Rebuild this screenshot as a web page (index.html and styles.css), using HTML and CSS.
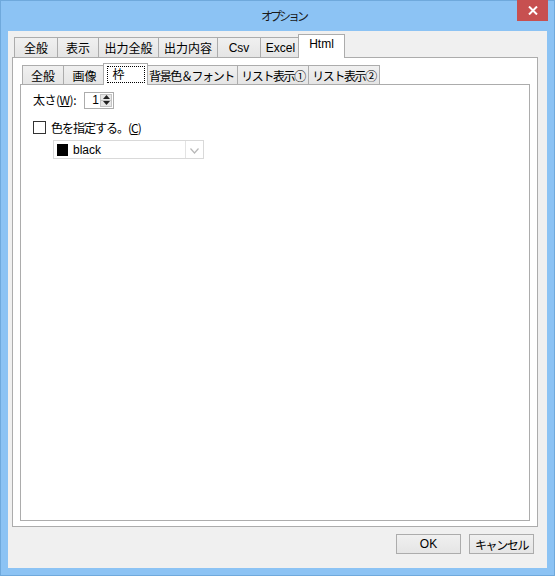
FILE: index.html
```html
<!DOCTYPE html>
<html lang="ja">
<head>
<meta charset="utf-8">
<link rel="stylesheet" href="styles.css">
</head>
<body>
<div class="window">
  <div class="titlebar">
    <span class="title">オプション</span>
    <div class="close"><svg width="10" height="9" viewBox="0 0 10 9"><path d="M1 0.5 L9 8.5 M9 0.5 L1 8.5" stroke="#fff" stroke-width="2"/></svg></div>
  </div>
  <div class="client">
    <div class="tabctl outer">
      <div class="tabs">
        <div class="tab t43">全般</div>
        <div class="tab t41">表示</div>
        <div class="tab t60">出力全般</div>
        <div class="tab t59">出力内容</div>
        <div class="tab t43 latin">Csv</div>
        <div class="tab t40 latin">Excel</div>
        <div class="tab t42 latin sel">Html</div>
      </div>
      <div class="panel outer-panel">
        <div class="tabctl inner">
          <div class="tabs">
            <div class="tab t41">全般</div>
            <div class="tab t42">画像</div>
            <div class="tab t40 sel"><span class="focus">枠</span></div>
            <div class="tab t92 kana">背景色＆フォント</div>
            <div class="tab t71 kana">リスト表示①</div>
            <div class="tab t71 kana">リスト表示②</div>
          </div>
          <div class="panel inner-panel">
            <div class="row width-row">
              <span class="label">太さ(<u>W</u>):</span>
              <div class="spin">
                <span class="spin-val">1</span>
                <div class="spin-btns">
                  <div class="spin-btn"><svg width="7" height="4" viewBox="0 0 7 4"><path d="M0 4 L3.5 0 L7 4Z" fill="#222"/></svg></div>
                  <div class="spin-btn"><svg width="7" height="4" viewBox="0 0 7 4"><path d="M0 0 L3.5 4 L7 0Z" fill="#222"/></svg></div>
                </div>
              </div>
            </div>
            <div class="row check-row">
              <span class="checkbox"></span>
              <span class="label kana">色を指定する。(<u>C</u>)</span>
            </div>
            <div class="combo">
              <div class="combo-field">
                <span class="swatch"></span>
                <span class="combo-text">black</span>
              </div>
              <div class="combo-arrow"><svg width="9" height="6" viewBox="0 0 9 6"><path d="M0.5 0.5 L4.5 5 L8.5 0.5" fill="none" stroke="#b8b8b8" stroke-width="1.2"/></svg></div>
            </div>
          </div>
        </div>
      </div>
    </div>
    <div class="buttons">
      <div class="btn latin">OK</div>
      <div class="btn kana">キャンセル</div>
    </div>
  </div>
</div>
</body>
</html>
```
FILE: styles.css
```css
* { box-sizing: border-box; }
html, body { margin: 0; padding: 0; }
body {
  width: 555px;
  height: 576px;
  font-family: "Noto Sans CJK JP", "Liberation Sans", sans-serif;
  font-size: 12px;
  color: #000;
}
.window {
  width: 555px;
  height: 576px;
  background: #8cc3f4;
  border: 1px solid #6fa9dc;
  display: flex;
  flex-direction: column;
}
.titlebar {
  position: relative;
  height: 30px;
  display: flex;
  align-items: center;
  justify-content: center;
}
.title {
  font-size: 12px;
  letter-spacing: -3px;
  color: #1a1a1a;
  margin-left: 12px;
  margin-bottom: 1px;
}
.close {
  position: absolute;
  right: 6px;
  top: -1px;
  width: 31px;
  height: 21px;
  background: #c75050;
  display: flex;
  align-items: center;
  justify-content: center;
}
.client {
  flex: 1;
  margin: 0 7px 7px 7px;
  background: #f0f0f0;
  padding: 3px 9px 0 4px;
  display: flex;
  flex-direction: column;
}
.tabctl { display: flex; flex-direction: column; }
.tabs {
  display: flex;
  align-items: flex-end;
  padding-left: 2px;
  height: 23px;
  position: relative;
  z-index: 2;
}
.tab {
  height: 20px;
  border: 1px solid #acacac;
  border-bottom: none;
  margin-right: -1px;
  background: linear-gradient(#f0f0f0, #e5e5e5);
  display: flex;
  align-items: center;
  justify-content: center;
  line-height: 1;
  white-space: nowrap;
  padding-top: 1px;
}
.tab.sel {
  background: #fff;
  margin-left: -2px;
  margin-right: -3px;
  position: relative;
  z-index: 3;
  height: 24px;
  margin-bottom: -1px;
  align-items: flex-start;
  padding-top: 3px;
}
.kana { letter-spacing: -1.4px; }
.latin { font-family: "Liberation Sans", sans-serif; letter-spacing: 0; }
.t40 { width: 41px; }
.t41 { width: 42px; }
.t42 { width: 43px; }
.t43 { width: 44px; }
.t59 { width: 60px; }
.t60 { width: 61px; }
.t71 { width: 72px; }
.t92 { width: 93px; }
.tab.sel.t42 { width: 47px; }
.tab.sel.t40 { width: 45px; }
.panel {
  border: 1px solid #acacac;
  background: #fff;
  position: relative;
  z-index: 1;
}
.outer-panel {
  height: 470px;
  padding: 5px 7px 6px 7px;
}
.inner .tabs { height: 21px; }
.inner .tab { height: 19px; }
.inner .tab.sel { height: 22px; padding-top: 2px; }
.focus {
  display: block;
  width: 38px;
  height: 17px;
  border: 1px dotted #000;
  padding-left: 5px;
  text-align: left;
  line-height: 14px;
}
.inner-panel {
  height: 437px;
  padding: 5px 0 0 12px;
}
.row { display: flex; align-items: center; }
.width-row { height: 19px; }
.width-row .label { width: 51px; letter-spacing: -0.5px; }
.spin {
  width: 30px;
  height: 17px;
  border: 1px solid #acacac;
  display: flex;
  margin-top: 1px;
}
.spin-val {
  flex: 1;
  text-align: right;
  padding-right: 1px;
  line-height: 14px;
  font-family: "Liberation Sans", sans-serif;
}
.spin-btns {
  width: 13px;
  display: flex;
  flex-direction: column;
  padding: 1px 1px 1px 0;
}
.spin-btn {
  flex: 1;
  background: #e8e8e8;
  border: 1px solid #c4c4c4;
  display: flex;
  align-items: center;
  justify-content: center;
}
.spin-btn + .spin-btn { border-top: none; }
.check-row { margin-top: 10px; height: 16px; }
.checkbox {
  width: 13px;
  height: 13px;
  border: 1px solid #333;
  background: #fff;
  margin-right: 5px;
}
.check-row .label { letter-spacing: -1px; }
.combo {
  margin: 5px 0 0 20px;
  width: 151px;
  height: 19px;
  border: 1px solid #d9d9d9;
  display: flex;
}
.combo-field {
  width: 132px;
  border-right: 1px solid #e3e3e3;
  display: flex;
  align-items: center;
  padding-left: 3px;
}
.swatch {
  width: 11px;
  height: 12px;
  background: #000;
  margin-right: 5px;
}
.combo-text { font-family: "Liberation Sans", sans-serif; }
.combo-arrow {
  flex: 1;
  display: flex;
  align-items: center;
  justify-content: center;
  padding-top: 2px;
}
.buttons {
  display: flex;
  justify-content: flex-end;
  gap: 8px;
  margin-top: 7px;
  padding-right: 4px;
}
.btn {
  width: 65px;
  height: 20px;
  border: 1px solid #acacac;
  background: linear-gradient(#f0f0f0, #e5e5e5);
  display: flex;
  align-items: center;
  justify-content: center;
}
```
